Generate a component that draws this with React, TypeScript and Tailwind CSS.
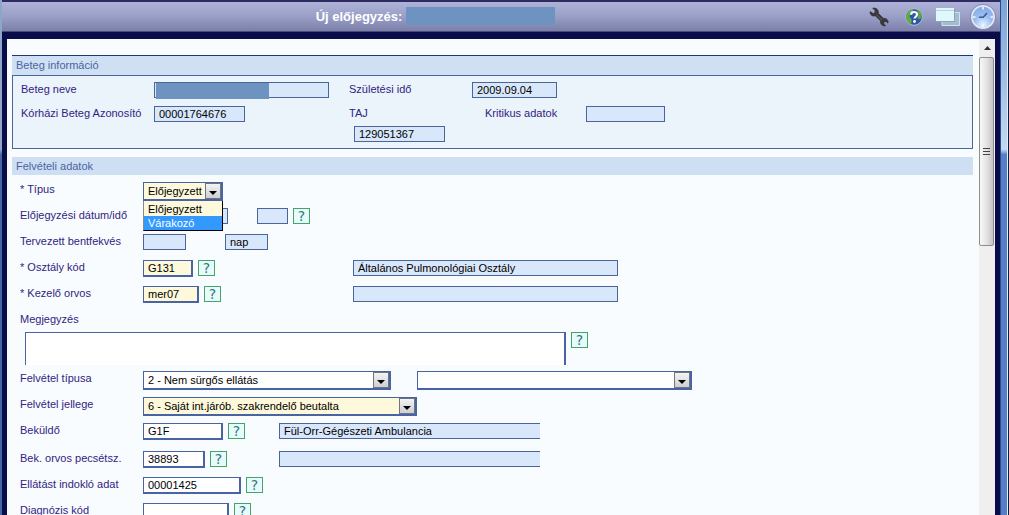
import * as React from 'react';
import { useState } from 'react';
import clsx from 'clsx';

const labelClass = 'shrink-0 text-[11px] leading-[14px] text-[#32237f] whitespace-nowrap';
const readOnlyClass = 'h-4 shrink-0 px-1 border border-[#4c649c] bg-[#d9e7fb] text-[11px] text-black outline-none';
const editableClass = 'h-[17px] shrink-0 px-1 border border-r-2 border-b-2 border-[#4864a4] text-[11px] text-black outline-none';
const requiredBg = 'bg-[#fdf9da]';

function Row({ id, label, className, children }: { id?: string; label: string; className?: string; children?: React.ReactNode }) {
  return (
    <div className={clsx('flex items-start', className ?? 'h-[26px]')}>
      <label htmlFor={id} className={clsx(labelClass, 'w-[123px]')}>{label}</label>
      {children}
    </div>
  );
}

function ReadOnly({ id, value = '', className, title }: { id?: string; value?: string; className: string; title?: string }) {
  return <input id={id} readOnly aria-label={title} defaultValue={value} className={clsx(readOnlyClass, className)} />;
}

function Editable({ id, value = '', className }: { id: string; value?: string; className: string }) {
  return <input id={id} defaultValue={value} className={clsx(editableClass, className)} />;
}

function LookupButton({ label }: { label: string }) {
  return (
    <button
      type="button"
      aria-label={label}
      className="ml-[5px] flex h-4 w-[17px] shrink-0 items-center justify-center border border-[#42a56c] bg-[#e6fbfa] font-['DejaVu_Sans'] text-[14px] leading-none text-[#2f7a78]"
    >
      ?
    </button>
  );
}

function SelectBox({ id, title, className, children, ...rest }: React.SelectHTMLAttributes<HTMLSelectElement> & { title?: string }) {
  return (
    <div className={clsx('relative h-[19px] shrink-0', className)}>
      <select
        id={id}
        aria-label={title}
        className="block h-full w-full appearance-none border border-r-2 border-b-2 border-[#4864a4] bg-transparent pl-1 text-[11px] text-black outline-none"
        {...rest}
      >
        {children}
      </select>
      <span className="pointer-events-none absolute top-px right-[2px] flex h-4 w-4 items-center justify-center border border-[#6e7480] bg-linear-to-b from-[#f4f4f4] to-[#cfcfd2]">
        <svg width="8" height="4" viewBox="0 0 8 4" className="mt-[3px]"><path d="M0 0h8L4 4z" fill="#000" /></svg>
      </span>
    </div>
  );
}

function WrenchIcon() {
  return (
    <svg width="20" height="20" viewBox="0 0 20 20">
      <path
        d="M1.200 4.600 4 6.600 6 5.800 6.100 3.600 3.800 1.200C6.200.7 8.600 1.800 9.200 4.100c.2.800.1 1.600 0 2.200l5.200 5.200c1.700-.4 3.600.3 4.300 2 .4 1 .4 1.800.2 2.600l-1.900-1.800-2 .6-.4 1.900 2 1.900c-2.300.5-4.400-.7-4.900-2.800-.2-.8-.1-1.400 0-2L6.300 8.800C4.200 9.400 2.200 8.600 1.400 6.700c-.3-.7-.3-1.400-.2-2.100z"
        fill="#3a393e"
        stroke="#302f36"
        strokeWidth="0.800"
      />
      <path d="m7.500 7.700 5.600 5.500" stroke="#66666c" strokeWidth="0.800" />
    </svg>
  );
}

function HelpIcon() {
  return (
    <svg width="18" height="18" viewBox="0 0 18 18">
      <circle cx="9" cy="9" r="8.300" fill="#2d55a8" stroke="#b4c3da" strokeWidth="0.900" />
      <path d="M1.500 6C3 2.600 6 1 8.600 1.200L7.400 4 5 5.500 4.600 9l2 2.300-.2 4.800C3 15 1 12 1 9z" fill="#5fae45" />
      <path d="M12 1.700c2.600 1 4.600 3.400 4.900 6.200l-1.700 3.600-2.800-1L13 6z" fill="#58a646" />
      <path d="M6.100 6.700C6.100 4.900 7.300 4 9 4s3 .9 3 2.500c0 2.200-2.400 2.200-2.400 4" fill="none" stroke="#fff" strokeWidth="2.200" />
      <circle cx="9.500" cy="13.500" r="1.400" fill="#fff" />
    </svg>
  );
}

function WindowsIcon() {
  return (
    <svg width="26" height="20" viewBox="0 0 26 20">
      <path d="M7 5.500h17.500v13H7z" fill="#a5bccf" stroke="#cfe3ec" />
      <path d="M1 1h18v13H1z" fill="#def8fb" />
      <path d="M1 3.500h18" stroke="#b4d6e0" />
      <path d="M1 14.500h18.500V2" fill="none" stroke="#8aa5bc" />
    </svg>
  );
}

function ClockIcon() {
  return (
    <svg width="26" height="26" viewBox="0 0 26 26">
      <defs>
        <radialGradient id="clockFace" cx="0.500" cy="0.850" r="0.800">
          <stop offset="0" stopColor="#e6f3ff" />
          <stop offset="0.500" stopColor="#9cbff2" />
          <stop offset="1" stopColor="#86a9e6" />
        </radialGradient>
      </defs>
      <circle cx="13" cy="13" r="11.300" fill="url(#clockFace)" stroke="#dfe5f1" strokeWidth="2" />
      <circle cx="13" cy="13" r="12.600" fill="none" stroke="#6d749d" strokeWidth="0.600" />
      <path d="M13 3v2.500M13 20.500V23M3 13h2.500M20.500 13H23" stroke="#f4f8ff" strokeWidth="1.600" />
      <path d="m17 9-3.800 4.300H9" fill="none" stroke="#3d5a92" strokeWidth="1.600" />
    </svg>
  );
}

function TitleBar() {
  return (
    <header className="flex h-8 shrink-0 items-center border-t-2 border-b border-t-[#2e2b60] border-b-[#484c78] bg-linear-to-b from-[#aeb2d8] via-[#9a9fc7] to-[#7c80a8] pr-1">
      <div className="flex flex-1 items-center justify-center">
        <h1 className="text-[13px] font-bold text-white">Új előjegyzés:</h1>
        <span className="mb-px ml-1 h-[18px] w-[149px] bg-[#6f93c1]" />
      </div>
      <nav className="flex items-center">
        <button type="button" aria-label="Beállítások" className="mr-4"><WrenchIcon /></button>
        <button type="button" aria-label="Súgó" className="mr-3"><HelpIcon /></button>
        <button type="button" aria-label="Ablakok" className="mr-[9px]"><WindowsIcon /></button>
        <button type="button" aria-label="Óra"><ClockIcon /></button>
      </nav>
    </header>
  );
}

function PatientInfo() {
  return (
    <section>
      <h2 className="h-5 border-t border-[#22357c] bg-[#cfe0f3] pl-1 text-[11px] leading-[18px] text-[#4a64a4]">Beteg információ</h2>
      <div className="h-[74px] border border-[#4c649c] bg-[#ebf3fb] pt-[6px] pl-2">
        <div className="flex h-6 items-start">
          <label htmlFor="name" className={clsx(labelClass, 'w-[133px]')}>Beteg neve</label>
          <div className="relative w-[195px] shrink-0">
            <ReadOnly id="name" className="block w-[175px]" />
            <span className="absolute top-px left-[2px] h-4 w-[113px] bg-[#6f93c1]" />
          </div>
          <label htmlFor="birth" className={clsx(labelClass, 'w-[123px]')}>Születési idő</label>
          <ReadOnly id="birth" value="2009.09.04" className="w-[85px]" />
        </div>
        <div className="flex h-5 items-start">
          <label htmlFor="hospital-id" className={clsx(labelClass, 'w-[133px]')}>Kórházi Beteg Azonosító</label>
          <div className="w-[195px] shrink-0">
            <ReadOnly id="hospital-id" value="00001764676" className="block w-[91px]" />
          </div>
          <label htmlFor="taj" className={clsx(labelClass, 'w-[136px]')}>TAJ</label>
          <label htmlFor="critical" className={clsx(labelClass, 'w-[101px]')}>Kritikus adatok</label>
          <ReadOnly id="critical" className="w-[79px]" />
        </div>
        <ReadOnly id="taj" value="129051367" className="ml-[333px] block w-[91px]" />
      </div>
    </section>
  );
}

const typeOptions = ['Előjegyzett', 'Várakozó'];

function AdmissionForm() {
  const [type, setType] = useState('Előjegyzett');
  const [open, setOpen] = useState(true);

  return (
    <section className="mt-2">
      <h2 className="h-[18px] bg-[#cfdff3] pl-1 text-[11px] leading-[18px] text-[#4a64a4]">Felvételi adatok</h2>
      <form className="pt-[7px] pl-2">
        <Row id="type" label="* Típus">
          <div className="relative">
            <SelectBox id="type" className={clsx('w-20', requiredBg)} value={type} onChange={(e) => setType(e.target.value)}>
              {typeOptions.map((o) => <option key={o}>{o}</option>)}
            </SelectBox>
            {open && (
              <ul className="absolute top-[19px] left-0 z-10 w-20 border border-t-0 border-black border-l-[#8a8a8a] bg-[#fdf9da] pt-px text-[11px] leading-[14px] text-black">
                {typeOptions.map((o) => (
                  <li
                    key={o}
                    onClick={() => { setType(o); setOpen(false); }}
                    className={clsx('pl-1', o === 'Várakozó' && 'bg-[#3399ff] text-white')}
                  >
                    {o}
                  </li>
                ))}
              </ul>
            )}
          </div>
        </Row>

        <Row id="date" label="Előjegyzési dátum/idő">
          <div className="flex w-[114px] shrink-0"><ReadOnly id="date" className="w-[85px]" /></div>
          <ReadOnly title="Idő" className="w-[31px]" />
          <LookupButton label="Időpont keresése" />
        </Row>

        <Row id="stay" label="Tervezett bentfekvés">
          <div className="flex w-[82px] shrink-0"><ReadOnly id="stay" className="w-[43px]" /></div>
          <ReadOnly title="Egység" value="nap" className="w-[43px]" />
        </Row>

        <Row id="ward" label="* Osztály kód">
          <div className="flex w-[210px] shrink-0">
            <Editable id="ward" value="G131" className={clsx('w-[50px]', requiredBg)} />
            <LookupButton label="Osztály keresése" />
          </div>
          <ReadOnly title="Osztály neve" value="Általános Pulmonológiai Osztály" className="w-[265px]" />
        </Row>

        <Row id="doctor" label="* Kezelő orvos">
          <div className="flex w-[210px] shrink-0">
            <Editable id="doctor" value="mer07" className={clsx('w-[56px]', requiredBg)} />
            <LookupButton label="Orvos keresése" />
          </div>
          <ReadOnly title="Orvos neve" className="w-[265px]" />
        </Row>

        <Row id="note" label="Megjegyzés" className="h-5" />
        <div className="flex h-[39px] items-start pl-[5px]">
          <textarea id="note" className="block h-[33px] w-[541px] shrink-0 resize-none border border-r-2 border-b-0 border-[#4864a4] bg-white px-1 text-[11px] outline-none" />
          <LookupButton label="Megjegyzés keresése" />
        </div>

        <Row id="adm-type" label="Felvétel típusa">
          <div className="w-[274px] shrink-0">
            <SelectBox id="adm-type" className="w-[248px] bg-white">
              <option>2 - Nem sürgős ellátás</option>
            </SelectBox>
          </div>
          <SelectBox title="Felvétel altípusa" className="w-[275px] bg-white">
            <option></option>
          </SelectBox>
        </Row>

        <Row id="adm-kind" label="Felvétel jellege">
          <SelectBox id="adm-kind" className={clsx('w-[274px]', requiredBg)}>
            <option>6 - Saját int.járób. szakrendelő beutalta</option>
          </SelectBox>
        </Row>

        <Row id="referrer" label="Beküldő" className="h-7">
          <div className="flex w-[136px] shrink-0">
            <Editable id="referrer" value="G1F" className="w-20 bg-white" />
            <LookupButton label="Beküldő keresése" />
          </div>
          <ReadOnly title="Beküldő neve" value="Fül-Orr-Gégészeti Ambulancia" className="w-[261px] border-r-0" />
        </Row>

        <Row id="stamp" label="Bek. orvos pecsétsz.">
          <div className="flex w-[136px] shrink-0">
            <Editable id="stamp" value="38893" className="w-[62px] bg-white" />
            <LookupButton label="Pecsétszám keresése" />
          </div>
          <ReadOnly title="Beküldő orvos neve" className="w-[261px] border-r-0" />
        </Row>

        <Row id="reason" label="Ellátást indokló adat">
          <Editable id="reason" value="00001425" className="w-[98px] bg-white" />
          <LookupButton label="Indok keresése" />
        </Row>

        <Row id="diagnosis" label="Diagnózis kód">
          <Editable id="diagnosis" className="w-[86px] bg-white" />
          <LookupButton label="Diagnózis keresése" />
        </Row>
      </form>
    </section>
  );
}

function Scrollbar() {
  return (
    <div className="flex w-4 shrink-0 flex-col bg-[#efefef]">
      <div className="flex h-[18px] items-center justify-center">
        <svg width="7" height="4" viewBox="0 0 7 4"><path d="M3.500 0 7 4H0z" fill="#333" /></svg>
      </div>
      <div className="mr-px flex h-[189px] items-center justify-center rounded-xs border border-[#8f8f8f] bg-linear-to-r from-[#f7f7f7] via-[#e4e4e4] to-[#c4c4c6]">
        <svg width="7" height="8" viewBox="0 0 7 8"><path d="M0 .5h7M0 3.500h7M0 6.500h7" stroke="#444" /></svg>
      </div>
    </div>
  );
}

export default function App() {
  return (
    <div className="flex h-screen overflow-hidden bg-[#0a0c4a] font-['Liberation_Sans',sans-serif]">
      <div className="w-[2px] shrink-0 bg-linear-to-b from-[#8ea6c8] from-29% to-[#4468a4] to-30%" />
      <div className="flex min-w-0 flex-1 flex-col">
        <TitleBar />
        <div className="mt-[7px] mr-[5px] ml-[5px] flex min-h-0 flex-1 bg-[#f8fcff]">
          <main className="min-w-0 flex-1 overflow-hidden pt-4 pr-[6px] pl-[5px]">
            <PatientInfo />
            <AdmissionForm />
          </main>
          <Scrollbar />
        </div>
      </div>
      {/* window frame */}
      <div className="w-[7px] shrink-0 border-l border-[#2c4a8c] bg-linear-to-b from-[#7ba3d8] via-[#c3d9f2] via-29% to-[#5580c8] to-30%" />
      <div className="w-[2px] shrink-0 border-r border-[#101c3c] bg-[#e4effb]" />
    </div>
  );
}
